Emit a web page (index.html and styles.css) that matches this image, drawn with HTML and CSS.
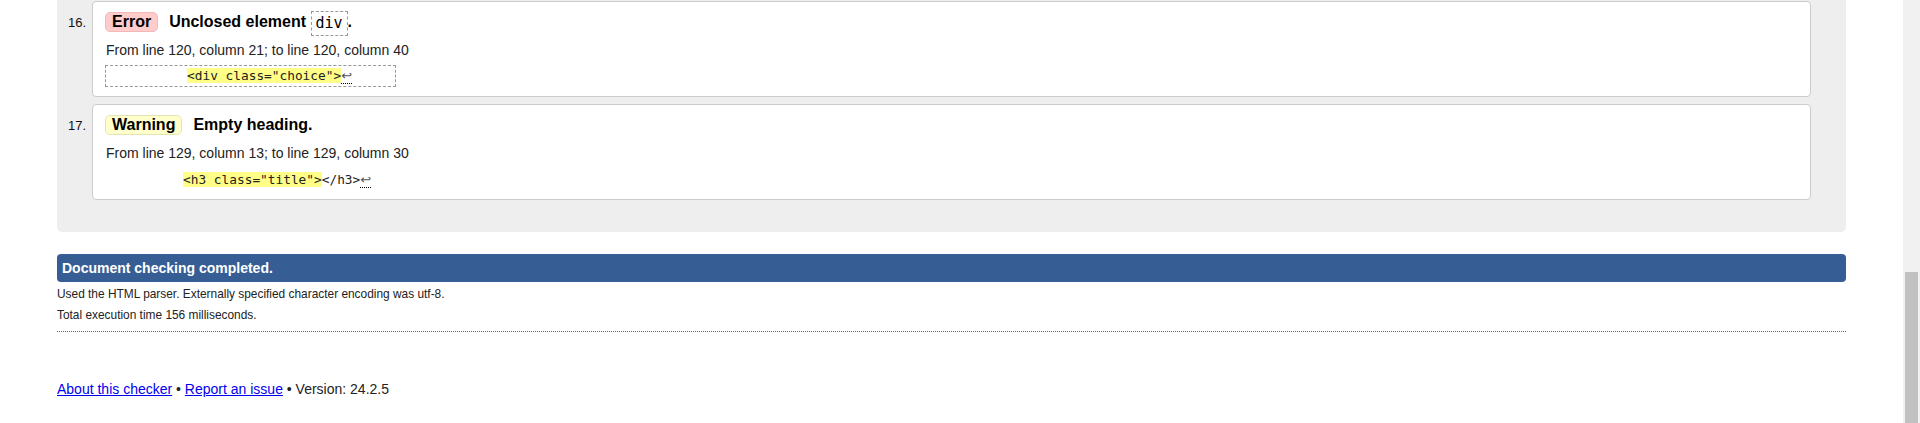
FILE: index.html
```html
<!DOCTYPE html>
<html lang="en">
<head>
<meta charset="utf-8">
<title>Nu Html Checker</title>
<link rel="stylesheet" href="styles.css">
</head>
<body>
<div class="page">
  <section class="results">
    <ol class="messages">
      <li class="msg">
        <span class="num">16.</span>
        <div class="card">
          <p class="head"><strong class="badge error">Error</strong><span class="title">Unclosed element <code class="name">div</code>.</span></p>
          <p class="loc">From line 120, column 21; to line 120, column 40</p>
          <p class="extract"><code class="outlined">          <b class="hl">&lt;div class="choice"&gt;</b><span class="lf">↩</span></code></p>
        </div>
      </li>
      <li class="msg">
        <span class="num">17.</span>
        <div class="card">
          <p class="head"><strong class="badge warning">Warning</strong><span class="title">Empty heading.</span></p>
          <p class="loc">From line 129, column 13; to line 129, column 30</p>
          <p class="extract"><code>          <b class="hl">&lt;h3 class="title"&gt;</b>&lt;/h3&gt;<span class="lf">↩</span></code></p>
        </div>
      </li>
    </ol>
  </section>

  <p class="done">Document checking completed.</p>
  <p class="details">Used the HTML parser. Externally specified character encoding was utf-8.</p>
  <p class="details">Total execution time 156 milliseconds.</p>
  <hr class="sep">

  <p class="footer"><a href="#">About this checker</a> • <a href="#">Report an issue</a> • Version: 24.2.5</p>
</div>
<div class="scrollbar"><div class="thumb"></div></div>
</body>
</html>
```

FILE: styles.css
```css
html, body {
  margin: 0;
  padding: 0;
  background: #fff;
}

body {
  font-family: "Liberation Sans", Arial, sans-serif;
  color: #111;
  overflow: hidden;
}

.page {
  margin: 0 74px 0 57px;
}

.results {
  background: #eee;
  border-radius: 0 0 5px 5px;
  margin-top: -20px;
  padding: 21px 35px 32px 11px;
}

.messages {
  list-style: none;
  margin: 0;
  padding: 0;
}

.msg {
  display: flex;
  align-items: baseline;
}

.msg + .msg {
  margin-top: 7px;
}

.num {
  width: 24px;
  flex: none;
  font-size: 13px;
  color: #111;
}

.card {
  flex: 1;
  background: #fff;
  border: 1px solid #ccc;
  border-radius: 4px;
  padding: 8px 13px 10px 13px;
}

.card p {
  margin: 0;
}

.head {
  height: 24px;
  font-size: 16px;
  line-height: 24px;
  font-weight: bold;
  color: #000;
}

.badge {
  display: inline-block;
  line-height: 18px;
  padding: 0 6px;
  border-radius: 5px;
  margin-left: -1px;
  margin-right: 11px;
}

.badge.error {
  background: #fcc;
  border: 1px solid #f2b8b8;
}

.badge.warning {
  background: #ffc;
  border: 1px solid #e4e4b4;
}

.name {
  display: inline-block;
  font-family: "DejaVu Sans Mono", monospace;
  font-weight: normal;
  font-size: 15px;
  line-height: 23px;
  padding: 0 4px;
  border: 1px dashed #999;
  vertical-align: -1px;
}

.loc {
  margin-top: 7px !important;
  font-size: 14px;
  line-height: 18px;
  color: #222;
}

.extract {
  margin-top: 7px !important;
  line-height: 20px;
  height: 20px;
}

.extract code {
  font-family: "DejaVu Sans Mono", monospace;
  font-size: 12.8px;
  white-space: pre;
  color: #222;
}

.extract code.outlined {
  display: inline-block;
  width: 285px;
  padding-left: 4px;
  outline: 1px dashed #999;
  line-height: 20px;
  height: 20px;
  vertical-align: top;
}

.hl {
  font-weight: normal;
  background: #ff8;
}

.lf {
  font-family: "DejaVu Sans", sans-serif;
  font-size: 13px;
  color: #555;
  border-bottom: 1px dotted #000;
}

.done {
  margin: 22px 0 0;
  height: 28px;
  line-height: 28px;
  padding-left: 5px;
  background: #365e95;
  color: #fff;
  font-weight: bold;
  font-size: 14px;
  border-radius: 4px;
}

.details {
  margin: 0;
  font-size: 11.9px;
  line-height: 21px;
  color: #222;
}

.done + .details {
  margin-top: 1.5px;
}

.sep {
  margin: 5px 0 0;
  border: 0;
  border-top: 1px dotted #666;
  height: 0;
}

.footer {
  margin: 47px 0 0;
  font-size: 14px;
  line-height: 20px;
  color: #222;
}

.footer a {
  color: #00e;
}

.scrollbar {
  position: fixed;
  top: 0;
  right: 0;
  width: 17px;
  height: 100%;
  background: #f1f1f1;
}

.thumb {
  position: absolute;
  top: 272px;
  left: 2px;
  width: 13px;
  bottom: 0;
  background: #c1c1c1;
}
```
